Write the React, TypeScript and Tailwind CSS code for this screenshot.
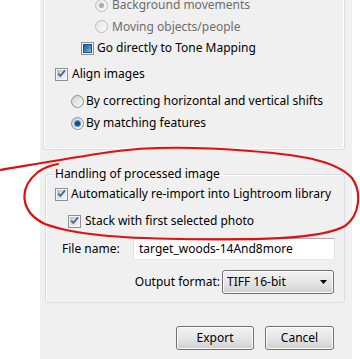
import React from "react";

function Check({ checked, mixed }: { checked?: boolean; mixed?: boolean }) {
  return (
    <span className="flex h-[13px] w-[13px] shrink-0 items-center justify-center border border-[#8e8f8f] bg-[#f4f4f4]">
      <span
        className={
          mixed
            ? "block h-[9px] w-[9px] border border-[#1c5180] bg-gradient-to-br from-[#1f5c99] via-[#3b86c4] to-[#7fc2ea]"
            : "flex h-[9px] w-[9px] items-center justify-center bg-gradient-to-br from-[#b5b8bd] via-[#dfe1e3] to-[#f6f6f6]"
        }
      >
        {checked && (
          <svg width="9" height="9" viewBox="0 0 9 9" className="-mt-[1px]">
            <path d="M1.2 4.6 L3.4 7 L8 1.4" fill="none" stroke="#4a5f97" strokeWidth="1.7" />
          </svg>
        )}
      </span>
    </span>
  );
}

function Radio({ selected, disabled }: { selected?: boolean; disabled?: boolean }) {
  return (
    <span
      className={
        disabled
          ? "flex h-[13px] w-[13px] shrink-0 items-center justify-center rounded-full border border-[#bcbcbc] bg-gradient-to-br from-[#e4e4e4] to-[#fbfbfb]"
          : "flex h-[13px] w-[13px] shrink-0 items-center justify-center rounded-full border border-[#8e8f8f] bg-gradient-to-br from-[#cfd1d4] to-[#fbfbfb]"
      }
    >
      {selected && (
        <span
          className={
            disabled
              ? "block h-[5px] w-[5px] rounded-full bg-[#a9a9a9]"
              : "block h-[5px] w-[5px] rounded-full bg-[#1b4d7c] shadow-[0_0_0_1px_#5a9ad0]"
          }
        />
      )}
    </span>
  );
}

const btn =
  "flex items-center rounded-[3px] border border-[#707070] bg-gradient-to-b from-[#f2f2f2] via-[#e6e6e6] to-[#d0d0d0] shadow-[inset_0_0_0_1px_#fcfcfc]";

export default function App() {
  return (
    <div className="relative h-[359px] w-[360px] overflow-hidden bg-white font-['Noto_Sans',sans-serif] text-[12px] leading-[16px] text-black">
      <div className="ml-[40px] flex h-full w-[312px] flex-col bg-[#f0f0f0]">
        {/* merge options group, top cut off */}
        <div className="-mt-[6px] ml-[3px] h-[156px] w-[302px] rounded-b-[3px] border border-t-0 border-[#d5dfe5] shadow-[inset_1px_0_0_#fff,inset_-1px_-1px_0_#fff]">
          <div className="flex h-[22px] items-center gap-[4px] pl-[51px] text-[#6d6d6d]">
            <Radio selected disabled />
            <span>Background movements</span>
          </div>
          <div className="flex h-[21px] items-center gap-[4px] pl-[51px] text-[#6d6d6d]">
            <Radio disabled />
            <span>Moving objects/people</span>
          </div>
          <div className="flex h-[22px] items-center gap-[3px] pl-[37px]">
            <Check mixed />
            <span>Go directly to Tone Mapping</span>
          </div>
          <div className="mt-[4px] flex h-[22px] items-center gap-[4px] pl-[11px]">
            <Check checked />
            <span>Align images</span>
          </div>
          <div className="mt-[5px] flex h-[22px] items-center gap-[2px] pl-[27px]">
            <Radio />
            <span>By correcting horizontal and vertical shifts</span>
          </div>
          <div className="flex h-[22px] items-center gap-[2px] pl-[27px]">
            <Radio selected />
            <span>By matching features</span>
          </div>
        </div>

        {/* handling group */}
        <fieldset className="mt-[16px] ml-[5px] w-[300px] rounded-[3px] border border-[#d5dfe5] px-0 pb-[8px] shadow-[inset_1px_1px_0_#fff]">
          <legend className="ml-[8px] pl-[1px] pr-[3px]">Handling of processed image</legend>
          <div className="mt-[1px] flex h-[22px] items-center gap-[3px] pl-[9px]">
            <Check checked />
            <span>Automatically re-import into Lightroom library</span>
          </div>
          <div className="mt-[5px] flex h-[22px] items-center gap-[4px] pl-[22px]">
            <Check checked />
            <span>Stack with first selected photo</span>
          </div>
          <div className="mt-[6px] flex h-[22px] items-center">
            <span className="ml-[16px] w-[71px]">File name:</span>
            <div className="flex h-[22px] w-[202px] items-center border border-[#abadb3] border-x-[#e2e3ea] border-b-[#e3e9ef] bg-white pl-[5px]">
              target_woods-14And8more
            </div>
          </div>
          <div className="mt-[10px] flex h-[24px] items-center">
            <span className="w-[176px] pr-[2px] text-right">Output format:</span>
            <div className={btn + " h-[24px] w-[112px] justify-between pl-[4px] pr-[6px]"}>
              <span>TIFF 16-bit</span>
              <svg width="7" height="4" viewBox="0 0 7 4">
                <path d="M0 0 H7 L3.5 4 Z" fill="#000" />
              </svg>
            </div>
          </div>
        </fieldset>

        <div className="mt-[23px] flex gap-[11px] pl-[136px]">
          <div className={btn + " h-[24px] w-[78px] justify-center"}>Export</div>
          <div className={btn + " h-[24px] w-[69px] justify-center"}>Cancel</div>
        </div>
      </div>

      {/* red hand-drawn annotation */}
      <svg className="pointer-events-none absolute left-0 top-0" width="360" height="359" viewBox="0 0 360 359">
        <path
          d="M0 170 C 30 165, 70 158, 110 152 C 150 146, 200 147, 250 151 C 300 155, 335 160, 352 178 C 362 192, 360 215, 345 226 C 320 240, 250 240, 180 239 C 120 238, 75 235, 45 224 C 20 212, 18 188, 38 172 C 45 167, 52 165, 58 164"
          fill="none"
          stroke="#e01010"
          strokeWidth="2.2"
          strokeLinecap="round"
        />
      </svg>
    </div>
  );
}
